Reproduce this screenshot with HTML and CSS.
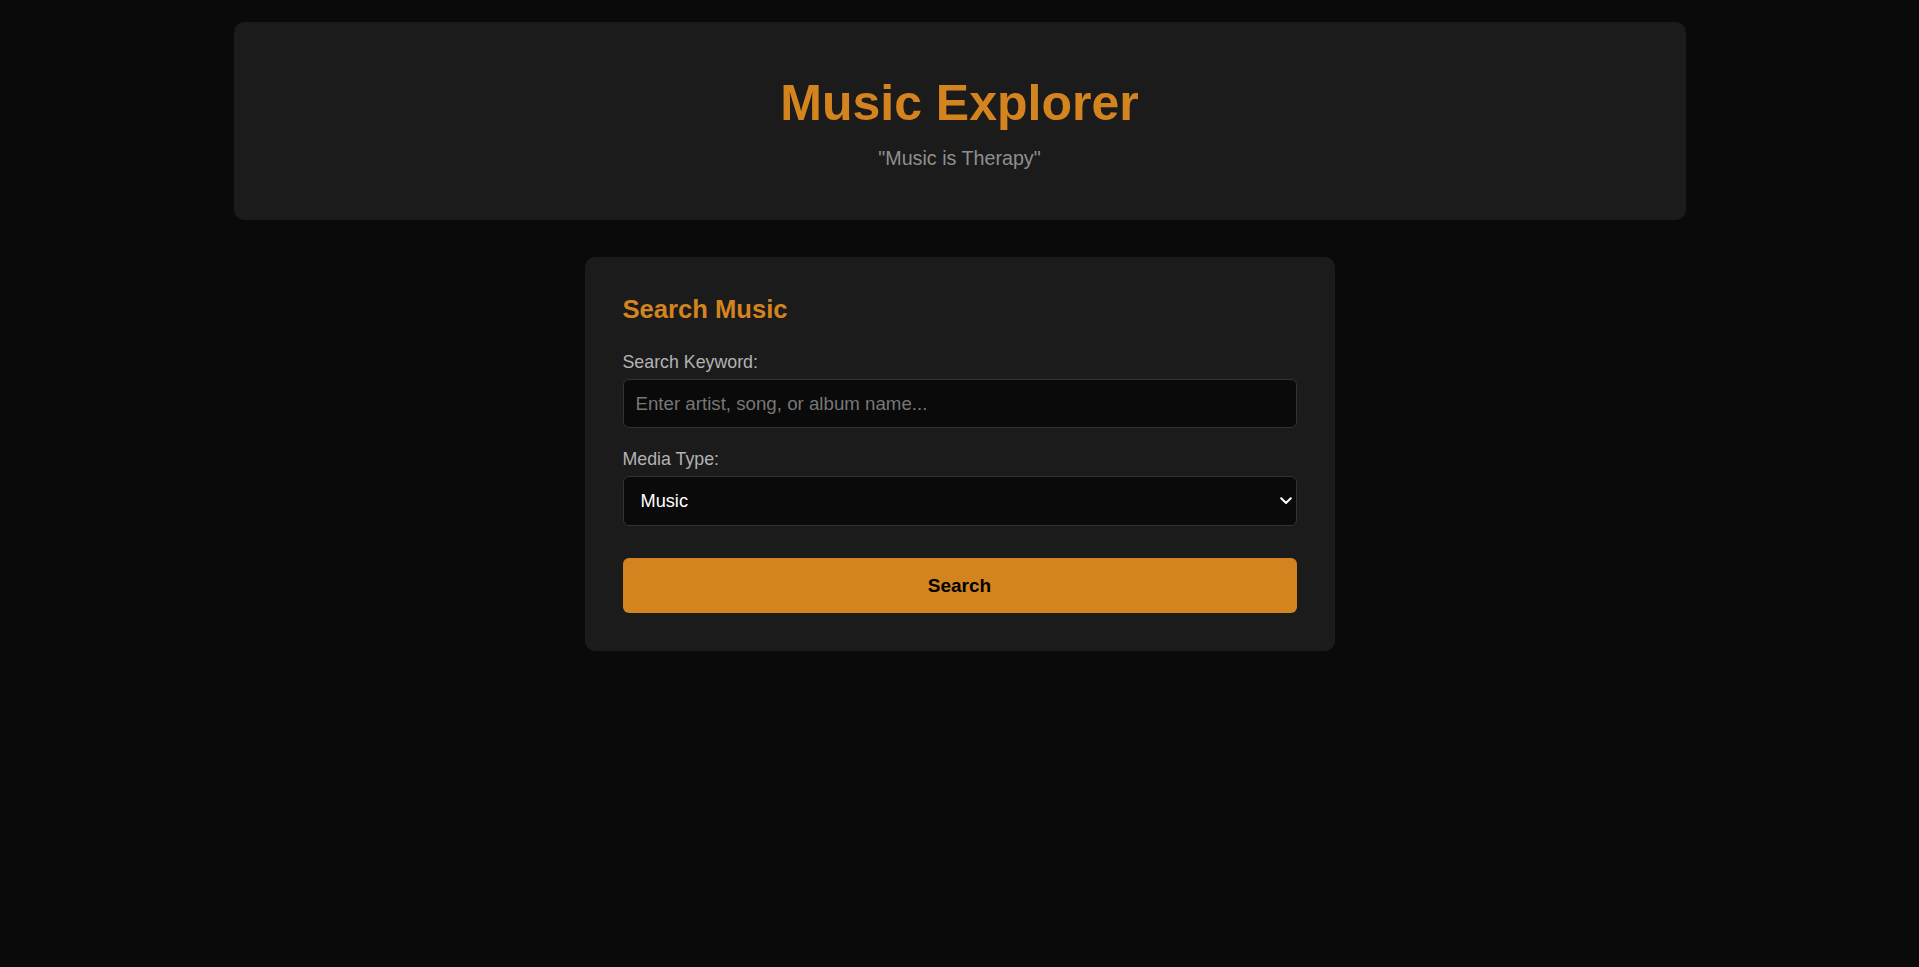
FILE: index.html
```html
<!DOCTYPE html>
<html lang="en">
<head>
<meta charset="utf-8">
<title>Music Explorer</title>
<link rel="stylesheet" href="styles.css">
</head>
<body>
  <header class="site-header">
    <h1 class="site-title">Music Explorer</h1>
    <p class="site-tagline">"Music is Therapy"</p>
  </header>
  <main class="search-card">
    <h2 class="card-title">Search Music</h2>
    <form class="search-form">
      <label class="field-label" for="kw">Search Keyword:</label>
      <input class="text-input" id="kw" type="text" placeholder="Enter artist, song, or album name...">
      <label class="field-label" for="media">Media Type:</label>
      <div class="select-wrap">
        <select class="select-input" id="media">
          <option>Music</option>
          <option>Music Video</option>
          <option>Podcast</option>
        </select>
        <svg class="select-chevron" width="12" height="8" viewBox="0 0 12 8" aria-hidden="true"><path d="M1.2 1.3 L6 6 L10.8 1.3" fill="none" stroke="#fff" stroke-width="2" stroke-linecap="round" stroke-linejoin="round"/></svg>
      </div>
      <button class="search-button" type="button">Search</button>
    </form>
  </main>
</body>
</html>
```
FILE: styles.css
```css
* { box-sizing: border-box; }

html, body {
  margin: 0;
  background: #0a0a0a;
}

body {
  font-family: "Liberation Sans", Arial, sans-serif;
  color: #ddd;
  padding-top: 22px;
}

.site-header {
  width: 1452px;
  margin: 0 auto;
  background: #1b1b1b;
  border-radius: 10px;
  padding: 51px 0 50px;
  text-align: center;
}

.site-title {
  margin: 0;
  font-size: 50px;
  line-height: 60px;
  font-weight: 700;
  color: #d4841f;
}

.site-tagline {
  margin: 13px 0 0;
  font-size: 19.7px;
  line-height: 24px;
  color: #8f8f8f;
}

.search-card {
  width: 750px;
  margin: 37px auto 0;
  background: #1b1b1b;
  border-radius: 10px;
  padding: 38px 38px 38px;
}

.card-title {
  margin: 0;
  font-size: 25.6px;
  line-height: 29px;
  font-weight: 700;
  color: #d4841f;
}

.search-form {
  display: flex;
  flex-direction: column;
  margin-top: 28px;
}

.field-label {
  font-size: 17.8px;
  line-height: 21px;
  color: #b3b3b3;
  margin-bottom: 6px;
}

.text-input,
.select-input {
  width: 100%;
  height: 49px;
  background: #0a0a0a;
  border: 1px solid #333;
  border-radius: 6px;
  padding: 0 12px;
  font-family: "Liberation Sans", Arial, sans-serif;
  font-size: 18.7px;
  color: #fff;
  outline: none;
}

.text-input { margin-bottom: 21px; }

.text-input::placeholder { color: #777; }

.select-wrap {
  position: relative;
}

.select-input {
  -webkit-appearance: none;
  appearance: none;
  height: 50px;
  padding-left: 17px;
  font-size: 18.2px;
}

.select-chevron {
  position: absolute;
  right: 5px;
  top: 21px;
  pointer-events: none;
}

.search-button {
  margin-top: 32px;
  height: 55px;
  width: 100%;
  border: none;
  border-radius: 6px;
  background: #d4841f;
  color: #000;
  font-family: "Liberation Sans", Arial, sans-serif;
  font-weight: 700;
  font-size: 19px;
  cursor: pointer;
}
```
